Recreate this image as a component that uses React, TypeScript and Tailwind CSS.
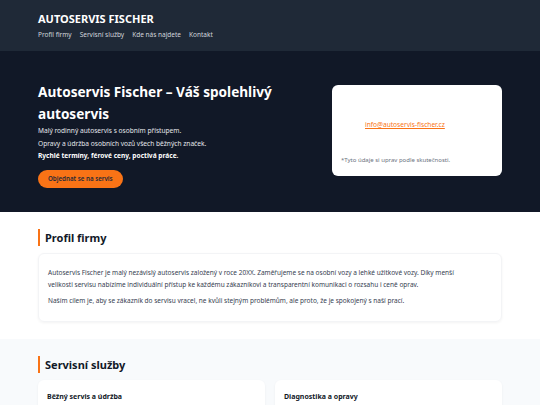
import React from "react";

export default function App() {
  return (
    <div className="min-h-[405px] bg-white text-[#1f2937]" style={{ fontFamily: '"Noto Sans", "Open Sans", sans-serif' }}>
      <header className="bg-[#1f2937] h-[51px]">
        <div className="mx-[38px] pt-[11px]">
          <div className="text-[11px] font-bold text-white leading-[15px]">AUTOSERVIS FISCHER</div>
          <nav className="mt-[4px] flex gap-[8px] text-[6.5px] text-[#d1d5db] leading-[10px]">
            <span>Profil firmy</span>
            <span>Servisní služby</span>
            <span>Kde nás najdete</span>
            <span>Kontakt</span>
          </nav>
        </div>
      </header>
      <section className="bg-[#111827] h-[161px]">
        <div className="mx-[38px] flex justify-between">
          <div className="pt-[30px] w-[290px]">
            <h1 className="text-[13.6px] font-bold text-white leading-[22px]">Autoservis Fischer – Váš spolehlivý<br />autoservis</h1>
            <div className="mt-0 text-[6.6px] leading-[12.5px] text-[#e5e7eb]">
              <p>Malý rodinný autoservis s osobním přístupem.</p>
              <p>Opravy a údržba osobních vozů všech běžných značek.</p>
              <p className="font-bold text-white">Rychlé termíny, férové ceny, poctivá práce.</p>
            </div>
            <button className="mt-[6px] h-[18px] px-[10px] rounded-full bg-[#f97316] text-[#1f2937] text-[6.2px] font-semibold leading-[18px]">Objednat se na servis</button>
          </div>
          <div className="mt-[34px] w-[170px] h-[91px] bg-white rounded-[6px] pl-[9px] pt-[35px]">
            <div className="ml-[24px] text-[6.6px] text-[#f97316] underline leading-[10px]">info@autoservis-fischer.cz</div>
            <div className="mt-[25px] text-[6px] text-[#6b7280] leading-[10px]">*Tyto údaje si uprav podle skutečnosti.</div>
          </div>
        </div>
      </section>
      <section className="bg-white pt-[17px] pb-[17px]">
        <div className="mx-[38px]">
          <h2 className="border-l-[2px] border-[#f97316] pl-[5px] text-[11px] font-bold leading-[17px] text-[#111827]">Profil firmy</h2>
          <div className="mt-[7px] rounded-[6px] border border-[#f3f4f6] shadow-[0_1px_3px_rgba(0,0,0,0.05)] px-[9px] pt-[13px] pb-[14px] text-[6.5px] leading-[12px] text-[#374151]">
            <p>Autoservis Fischer je malý nezávislý autoservis založený v roce 20XX. Zaměřujeme se na osobní vozy a lehké užitkové vozy. Díky menší<br />velikosti servisu nabízíme individuální přístup ke každému zákazníkovi a transparentní komunikaci o rozsahu i ceně oprav.</p>
            <p className="mt-[4px]">Naším cílem je, aby se zákazník do servisu vracel, ne kvůli stejným problémům, ale proto, že je spokojený s naší prací.</p>
          </div>
        </div>
      </section>
      <section className="bg-[#f8fafc] pt-[17px] pb-[20px]">
        <div className="mx-[38px]">
          <h2 className="border-l-[2px] border-[#f97316] pl-[5px] text-[11px] font-bold leading-[17px] text-[#111827]">Servisní služby</h2>
          <div className="mt-[7px] grid grid-cols-2 gap-[10px]">
            <div className="bg-white rounded-[6px] shadow-[0_1px_3px_rgba(0,0,0,0.05)] px-[9px] pt-[12px] h-[60px]">
              <div className="text-[7px] font-bold leading-[10px] text-[#111827]">Běžný servis a údržba</div>
            </div>
            <div className="bg-white rounded-[6px] shadow-[0_1px_3px_rgba(0,0,0,0.05)] px-[9px] pt-[12px] h-[60px]">
              <div className="text-[7px] font-bold leading-[10px] text-[#111827]">Diagnostika a opravy</div>
            </div>
          </div>
        </div>
      </section>
    </div>
  );
}
